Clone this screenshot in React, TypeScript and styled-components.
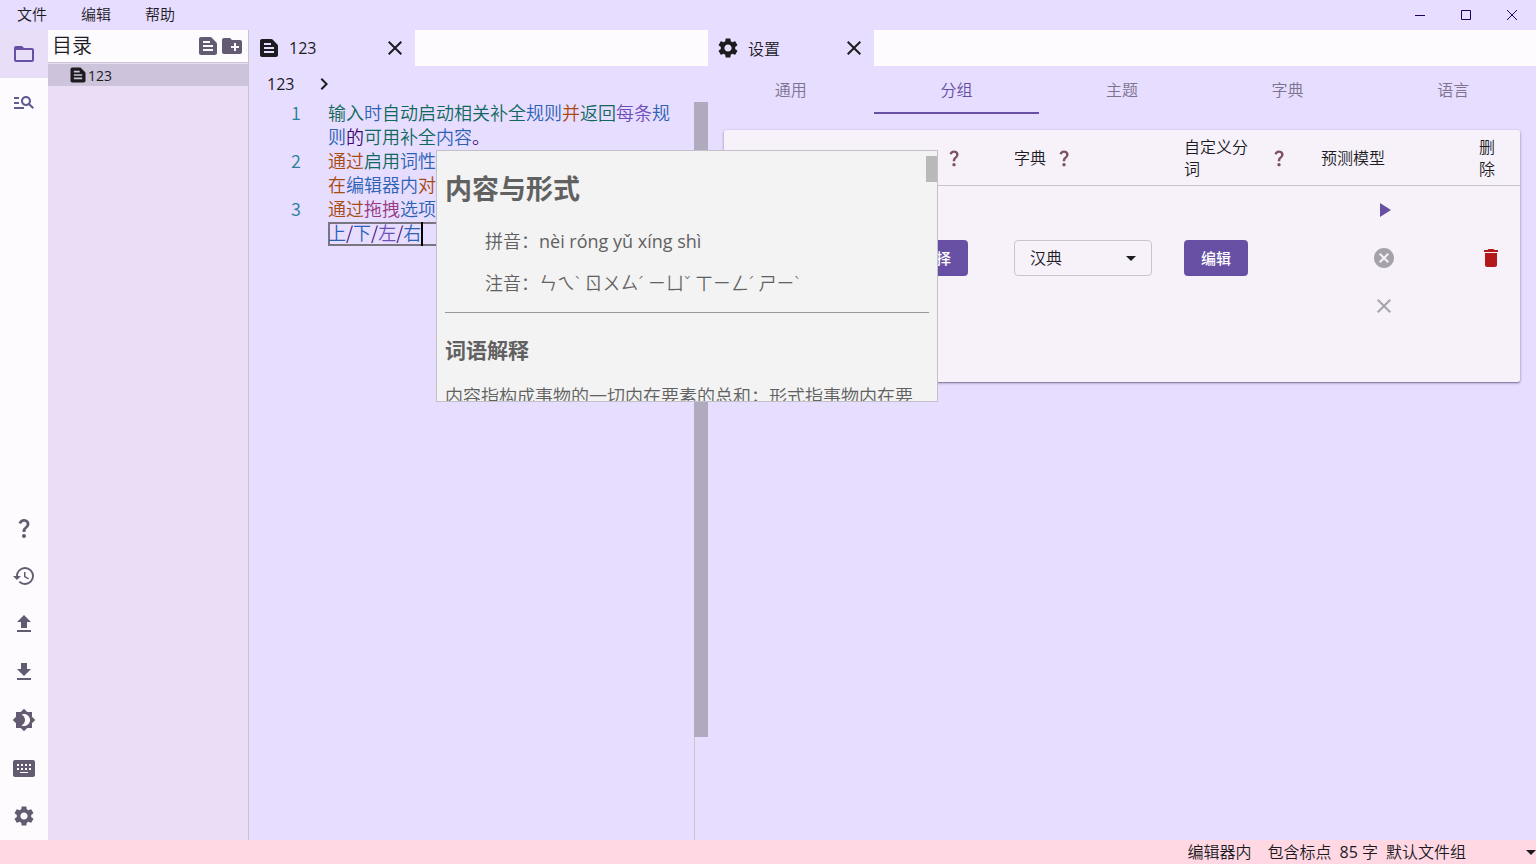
import React from 'react';
import styled, { createGlobalStyle } from 'styled-components';
import {
  MdFolderOpen, MdManageSearch, MdQuestionMark, MdHistory, MdUpload, MdDownload,
  MdBrightness4, MdKeyboardAlt, MdSettings, MdTextSnippet, MdCreateNewFolder,
  MdClose, MdChevronRight, MdArrowDropDown, MdPlayArrow, MdCancel, MdDelete,
} from 'react-icons/md';

const c = {
  surface: '#fefbff',
  lavender: '#e7ddff',
  lilac: '#eaddf6',
  primary: '#6750a4',
  text: '#1c1b1f',
  muted: '#625b71',
  outline: '#cac4d0',
  card: '#f7f2fa',
  pink: '#ffd8e4',
};

const GlobalStyle = createGlobalStyle`
  * { box-sizing: border-box; }
  body { margin: 0; }
  body, button, select {
    font-family: "Open Sans", "Noto Sans", "Noto Sans CJK SC", sans-serif;
    font-size: 16px;
    font-weight: 350;
    color: ${c.text};
  }
  button { border: 0; padding: 0; background: none; }
  svg { display: block; flex: none; }
`;

const Shell = styled.div`
  display: flex;
  flex-direction: column;
  height: 100vh;
  overflow: hidden;
  background: ${c.lavender};
`;

const TitleBar = styled.header`
  display: flex;
  justify-content: space-between;
  height: 30px;
  flex: none;
`;

const Menu = styled.nav`display: flex;`;

const MenuButton = styled.button`
  width: 64px;
  height: 28px;
  font-size: 15px;
  line-height: 28px;
`;

const WindowControls = styled.div`
  display: flex;
  padding-right: 1px;
`;

const WindowButton = styled.button`
  width: 46px;
  display: grid;
  place-items: center;
`;

const Body = styled.div`
  flex: 1;
  min-height: 0;
  display: flex;
`;

const Rail = styled.nav`
  width: 48px;
  flex: none;
  display: flex;
  flex-direction: column;
  background: ${c.surface};
`;

const RailSpacer = styled.div`flex: 1;`;

const RailButton = styled.button<{ $active?: boolean; $tint?: string }>`
  height: 48px;
  display: grid;
  place-items: center;
  color: ${p => p.$tint ?? c.muted};
  background: ${p => (p.$active ? '#e9def8' : 'transparent')};
`;

const Explorer = styled.aside`
  width: 201px;
  flex: none;
  background: ${c.lilac};
  border-right: 1px solid ${c.outline};
`;

const ExplorerHeader = styled.div`
  display: flex;
  align-items: center;
  height: 33px;
  padding: 0 4px;
  background: ${c.surface};
  border-bottom: 1px solid ${c.outline};
  color: ${c.muted};
`;

const ExplorerTitle = styled.h2`
  flex: 1;
  margin: 0;
  font-size: 20px;
  font-weight: 350;
  line-height: 32px;
  color: ${c.text};
`;

const IconButton = styled.button<{ $tint?: string }>`
  display: grid;
  place-items: center;
  color: ${p => p.$tint ?? 'inherit'};
`;

const Latin = styled.span`font-weight: 400;`;

const FileRow = styled.button`
  display: flex;
  align-items: center;
  width: 100%;
  height: 22px;
  margin-top: 1px;
  padding-left: 20px;
  font-size: 14px;
  background: #cdc4dc;
`;

const Pane = styled.section<{ $grow: number }>`
  flex: ${p => p.$grow} 1 0;
  min-width: 0;
  display: flex;
  flex-direction: column;
`;

const EditorPane = styled(Pane)`position: relative;`;

const TabStrip = styled.div`
  height: 36px;
  flex: none;
  background: ${c.surface};
`;

const PaneTab = styled.div`
  display: flex;
  align-items: center;
  gap: 8px;
  width: 166px;
  height: 36px;
  padding: 0 8px;
  background: ${c.lavender};
`;

const PaneTabLabel = styled.span`flex: 1;`;

const Breadcrumb = styled.nav`
  display: flex;
  align-items: center;
  gap: 18px;
  height: 36px;
  flex: none;
  padding-left: 18px;
`;

const EditorBody = styled.div`
  flex: 1;
  min-height: 0;
  display: flex;
`;

const Code = styled.div`
  flex: 1;
  font-family: "Noto Sans CJK SC", sans-serif;
  font-size: 18px;
  line-height: 20px;
`;

const CodeLine = styled.div`
  display: grid;
  grid-template-columns: 52px 1fr;
  column-gap: 27px;
`;

const LineNumber = styled.span`
  text-align: right;
  color: #2b7f9c;
`;

const CodeRow = styled.div<{ $current?: boolean }>`
  height: 24px;
  display: flex;
  white-space: nowrap;
  ${p => p.$current && `
    box-shadow: inset 0 0 0 2px #7b7583;
  `}
`;

const wordColors = {
  verb: '#10695c',
  noun: '#2c62b4',
  prep: '#a8490f',
  num: '#6c4dbb',
  aux: '#3c0a6e',
  drag: '#96397f',
};
type Kind = keyof typeof wordColors;

const Word = styled.span<{ $kind: Kind }>`color: ${p => wordColors[p.$kind]};`;

const Caret = styled.i`
  width: 2px;
  height: 24px;
  background: #000;
`;

const ScrollTrack = styled.div`
  width: 14px;
  border-left: 1px solid ${c.outline};
`;

const ScrollThumb = styled.div`
  height: 86%;
  margin-left: -1px;
  background: #b1a9bd;
`;

const Popup = styled.article`
  position: absolute;
  z-index: 2;
  left: 187px;
  top: 120px;
  width: 502px;
  height: 252px;
  overflow: hidden;
  padding: 0 8px;
  border: 1px solid #c4c0ca;
  background: #f3f3f3;
  color: #616161;
  font-size: 18px;
  line-height: 24px;
  h1 { margin: 20px 0 22px; font-size: 27px; line-height: 36px; }
  p { margin: 0 0 18px; }
  dl { margin: 0 0 17px; padding-left: 40px; display: grid; row-gap: 18px; }
  dl div { display: flex; }
  dd { margin: 0; }
  hr { margin: 0; border: 0; height: 1px; background: #999; }
  h2 { margin: 23px 0 20px; font-size: 21px; line-height: 28px; }
`;

const PopupThumb = styled.div`
  position: absolute;
  right: 0;
  top: 5px;
  width: 11px;
  height: 26px;
  background: #b9b9b9;
`;

const SettingsTabs = styled.div`
  display: grid;
  grid-template-columns: repeat(5, 1fr);
  height: 48px;
  flex: none;
`;

const SettingsTab = styled.button<{ $active?: boolean }>`
  color: ${p => (p.$active ? c.primary : '#7d748f')};
  border-bottom: 2px solid ${p => (p.$active ? c.primary : 'transparent')};
`;

const Card = styled.div`
  margin: 16px;
  padding-bottom: 52px;
  border-radius: 2px;
  background: ${c.card};
  box-shadow: 0 1px 3px rgba(40, 30, 70, 0.4), 0 1px 1px rgba(40, 30, 70, 0.3);
`;

const Table = styled.table`
  width: 100%;
  table-layout: fixed;
  border-collapse: separate;
  border-spacing: 0;
`;

const Col = styled.col<{ $w?: number }>`width: ${p => (p.$w ? `${p.$w}px` : 'auto')};`;

const HeadCell = styled.th`
  height: 56px;
  padding: 6px 16px 5px;
  border-bottom: 1px solid ${c.outline};
  text-align: left;
  font-weight: 350;
  line-height: 22px;
`;

const HeadContent = styled.div<{ $indent?: boolean }>`
  display: flex;
  align-items: center;
  padding-left: ${p => (p.$indent ? 40 : 0)}px;
  gap: 8px;
`;

const Cell = styled.td`
  height: 144px;
  padding: 0 16px;
`;

const FilledButton = styled.button`
  display: block;
  width: 64px;
  height: 36px;
  padding-bottom: 2px;
  border-radius: 4px;
  background: ${c.primary};
  color: #fff;
  font-size: 15px;
  font-weight: 500;
`;

const SelectBox = styled.div<{ $outlined?: boolean }>`
  display: grid;
  align-items: center;
  border: ${p => (p.$outlined ? `1px solid ${c.outline}` : '0')};
  border-radius: 4px;
  svg {
    grid-area: 1 / 1;
    justify-self: end;
    margin-right: ${p => (p.$outlined ? '8px' : '-7px')};
    pointer-events: none;
  }
`;

const Select = styled.select<{ $h: number; $pad: number }>`
  grid-area: 1 / 1;
  appearance: none;
  width: 100%;
  height: ${p => p.$h}px;
  padding: 0 0 0 ${p => p.$pad}px;
  border: 0;
  background: transparent;
`;

const ModelActions = styled.div`
  display: grid;
  grid-auto-rows: 48px;
  justify-content: center;
`;

const StatusBar = styled.footer`
  display: flex;
  justify-content: flex-end;
  align-items: center;
  height: 24px;
  flex: none;
  background: ${c.pink};
  line-height: 24px;
`;

const StatusText = styled.span<{ $gap: number }>`
  margin-right: ${p => p.$gap}px;
`;

const StatusSelect = styled.div`width: 150px;`;

type Token = [string, Kind];
const lines: Token[][][] = [
  [
    [['输入', 'verb'], ['时', 'noun'], ['自动启动相关补全', 'verb'], ['规则', 'noun'], ['并', 'prep'], ['返回', 'verb'], ['每条', 'num'], ['规', 'noun']],
    [['则', 'noun'], ['的', 'aux'], ['可用补全', 'verb'], ['内容', 'noun'], ['。', 'aux']],
  ],
  [
    [['通过', 'prep'], ['启用', 'verb'], ['词性', 'noun']],
    [['在', 'prep'], ['编辑器内', 'noun'], ['对', 'prep']],
  ],
  [
    [['通过', 'prep'], ['拖拽', 'drag'], ['选项', 'noun']],
    [['上', 'noun'], ['/', 'aux'], ['下', 'noun'], ['/', 'aux'], ['左', 'num'], ['/', 'aux'], ['右', 'noun']],
  ],
];

const railTools = [
  { label: '帮助', Icon: MdQuestionMark },
  { label: '历史', Icon: MdHistory },
  { label: '上传', Icon: MdUpload },
  { label: '下载', Icon: MdDownload },
  { label: '明暗', Icon: MdBrightness4 },
  { label: '键盘', Icon: MdKeyboardAlt },
  { label: '设置', Icon: MdSettings },
];

function PaneHeader({ icon, children }: { icon: React.ReactNode; children: React.ReactNode }) {
  return (
    <TabStrip>
      <PaneTab>
        {icon}
        <PaneTabLabel>{children}</PaneTabLabel>
        <IconButton aria-label="关闭"><MdClose size={24} /></IconButton>
      </PaneTab>
    </TabStrip>
  );
}

function Help() {
  return <IconButton aria-label="说明" $tint="#7d5260"><MdQuestionMark size={20} /></IconButton>;
}

function Explanation() {
  return (
    <Popup>
      <h1>内容与形式</h1>
      <dl>
        <div><dt>拼音：</dt><dd><Latin>nèi róng yǔ xíng shì</Latin></dd></div>
        <div><dt>注音：</dt><dd>ㄣㄟˋ ㄖㄨㄙˊ ㄧㄩˇ ㄒㄧㄥˊ ㄕㄧˋ</dd></div>
      </dl>
      <hr />
      <h2>词语解释</h2>
      <p>内容指构成事物的一切内在要素的总和；形式指事物内在要</p>
      <PopupThumb />
    </Popup>
  );
}

export default function App() {
  return (
    <Shell>
      <GlobalStyle />
      <TitleBar>
        <Menu>
          {['文件', '编辑', '帮助'].map(m => <MenuButton key={m}>{m}</MenuButton>)}
        </Menu>
        <WindowControls>
          <WindowButton aria-label="最小化">
            <svg width="10" height="10" stroke="#21005d" fill="none"><path d="M0 5.5h10" /></svg>
          </WindowButton>
          <WindowButton aria-label="最大化">
            <svg width="10" height="10" stroke="#21005d" fill="none"><path d="M.5.5h9v9h-9z" /></svg>
          </WindowButton>
          <WindowButton aria-label="关闭窗口">
            <svg width="10" height="10" stroke="#21005d" fill="none"><path d="M0 0l10 10M10 0L0 10" /></svg>
          </WindowButton>
        </WindowControls>
      </TitleBar>

      <Body>
        <Rail>
          <RailButton aria-label="目录" $active $tint={c.primary}><MdFolderOpen size={24} /></RailButton>
          <RailButton aria-label="搜索" $tint="#625b91"><MdManageSearch size={24} /></RailButton>
          <RailSpacer />
          {railTools.map(({ label, Icon }) => (
            <RailButton key={label} aria-label={label}><Icon size={24} /></RailButton>
          ))}
        </Rail>

        <Explorer>
          <ExplorerHeader>
            <ExplorerTitle>目录</ExplorerTitle>
            <IconButton aria-label="新建文件"><MdTextSnippet size={24} /></IconButton>
            <IconButton aria-label="新建文件夹"><MdCreateNewFolder size={24} /></IconButton>
          </ExplorerHeader>
          <FileRow><MdTextSnippet size={20} /><Latin>123</Latin></FileRow>
        </Explorer>

        <EditorPane $grow={51}>
          <PaneHeader icon={<MdTextSnippet size={24} />}><Latin>123</Latin></PaneHeader>
          <Breadcrumb><Latin>123</Latin><MdChevronRight size={24} /></Breadcrumb>
          <EditorBody>
            <Code>
              {lines.map((rows, i) => (
                <CodeLine key={i}>
                  <LineNumber>{i + 1}</LineNumber>
                  <div>
                    {rows.map((row, j) => {
                      const current = i === 2 && j === 1;
                      return (
                        <CodeRow key={j} $current={current}>
                          {row.map(([word, kind], k) => <Word key={k} $kind={kind}>{word}</Word>)}
                          {current && <Caret />}
                        </CodeRow>
                      );
                    })}
                  </div>
                </CodeLine>
              ))}
            </Code>
            <ScrollTrack><ScrollThumb /></ScrollTrack>
          </EditorBody>
          <Explanation />
        </EditorPane>

        <Pane $grow={92}>
          <PaneHeader icon={<MdSettings size={24} />}>设置</PaneHeader>
          <SettingsTabs role="tablist">
            {['通用', '分组', '主题', '字典', '语言'].map(t => (
              <SettingsTab key={t} role="tab" aria-selected={t === '分组'} $active={t === '分组'}>{t}</SettingsTab>
            ))}
          </SettingsTabs>
          <Card>
            <Table>
              <colgroup>
                <Col /><Col $w={110} /><Col $w={170} /><Col $w={137} /><Col $w={158} /><Col $w={57} />
              </colgroup>
              <thead>
                <tr>
                  <HeadCell />
                  <HeadCell><HeadContent $indent><Help /></HeadContent></HeadCell>
                  <HeadCell><HeadContent><span>字典</span><Help /></HeadContent></HeadCell>
                  <HeadCell><HeadContent><span>自定义分词</span><Help /></HeadContent></HeadCell>
                  <HeadCell>预测模型</HeadCell>
                  <HeadCell>删除</HeadCell>
                </tr>
              </thead>
              <tbody>
                <tr>
                  <Cell />
                  <Cell><FilledButton>选择</FilledButton></Cell>
                  <Cell>
                    <SelectBox $outlined>
                      <Select aria-label="字典" $h={34} $pad={15}><option>汉典</option></Select>
                      <MdArrowDropDown size={24} />
                    </SelectBox>
                  </Cell>
                  <Cell><FilledButton>编辑</FilledButton></Cell>
                  <Cell>
                    <ModelActions>
                      <IconButton aria-label="运行" $tint={c.primary}><MdPlayArrow size={24} /></IconButton>
                      <IconButton aria-label="停止" $tint="#a6a2aa"><MdCancel size={24} /></IconButton>
                      <IconButton aria-label="清除" $tint="#a6a2aa"><MdClose size={24} /></IconButton>
                    </ModelActions>
                  </Cell>
                  <Cell><IconButton aria-label="删除" $tint="#b3181b"><MdDelete size={24} /></IconButton></Cell>
                </tr>
              </tbody>
            </Table>
          </Card>
        </Pane>
      </Body>

      <StatusBar>
        <StatusText $gap={16}>编辑器内</StatusText>
        <StatusText $gap={8}>包含标点</StatusText>
        <StatusText $gap={8}><Latin>85</Latin> 字</StatusText>
        <StatusSelect>
          <SelectBox>
            <Select aria-label="文件组" $h={24} $pad={0}><option>默认文件组</option></Select>
            <MdArrowDropDown size={24} />
          </SelectBox>
        </StatusSelect>
      </StatusBar>
    </Shell>
  );
}
